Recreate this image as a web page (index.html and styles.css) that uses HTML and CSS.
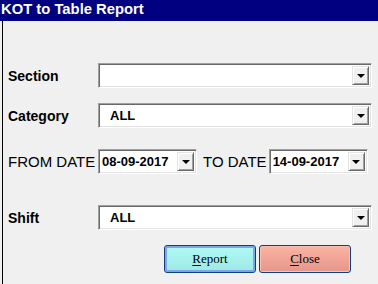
FILE: index.html
```html
<!DOCTYPE html>
<html lang="en">
<head>
    <meta charset="UTF-8">
    <title>KOT to Table Report</title>
    <link rel="stylesheet" href="styles.css">
</head>
<body>
    <div class="titlebar">KOT to Table Report</div>
    <div class="dialog">
        <!-- Section -->
        <div class="row row-section">
            <span class="label">Section</span>
            <div class="combo">
                <span class="combo-text"></span>
                <span class="combo-btn"><i class="arrow"></i></span>
            </div>
        </div>

        <!-- Category -->
        <div class="row row-category">
            <span class="label">Category</span>
            <div class="combo">
                <span class="combo-text">ALL</span>
                <span class="combo-btn"><i class="arrow"></i></span>
            </div>
        </div>

        <!-- Dates -->
        <div class="row row-dates">
            <span class="label label-plain">FROM DATE</span>
            <div class="combo combo-date">
                <span class="combo-text">08-09-2017</span>
                <span class="combo-btn"><i class="arrow"></i></span>
            </div>
            <span class="label-to">TO DATE</span>
            <div class="combo combo-date">
                <span class="combo-text">14-09-2017</span>
                <span class="combo-btn"><i class="arrow"></i></span>
            </div>
        </div>

        <!-- Shift -->
        <div class="row row-shift">
            <span class="label">Shift</span>
            <div class="combo">
                <span class="combo-text">ALL</span>
                <span class="combo-btn"><i class="arrow"></i></span>
            </div>
        </div>

        <div class="buttons">
            <button class="btn btn-report"><u>R</u>eport</button>
            <button class="btn btn-close"><u>C</u>lose</button>
        </div>
    </div>
</body>
</html>
```

FILE: styles.css
```css
html, body {
    margin: 0;
    padding: 0;
    height: 100%;
}
body {
    background: #f0f0f0;
    color: #000;
    font-family: "Liberation Sans", Arial, sans-serif;
    overflow: hidden;
}
.titlebar {
    height: 21px;
    line-height: 19px;
    background: #000080;
    color: #fff;
    font-weight: bold;
    font-size: 14.8px;
    padding-left: 1px;
}
.dialog {
    margin-left: 2px;
    border-left: 1px solid #000;
    height: 263px;
    box-sizing: border-box;
    overflow: hidden;
}
.row {
    display: flex;
    align-items: center;
    height: 25px;
}
.row-section { margin-top: 42px; }
.row-category { margin-top: 15px; }
.row-dates { margin-top: 21px; }
.row-shift { margin-top: 31px; }
.label {
    width: 90px;
    padding-left: 5px;
    flex: none;
    font-size: 14px;
    font-weight: bold;
}
.label-plain {
    font-weight: normal;
    font-size: 15px;
    white-space: nowrap;
}
.label-to {
    font-size: 15px;
    margin: 0 2px 0 6px;
    white-space: nowrap;
}
/* sunken combo box */
.combo {
    display: flex;
    align-items: stretch;
    width: 274px;
    height: 25px;
    box-sizing: border-box;
    background: #fff;
    border: 1px solid;
    border-color: #a0a0a0 #fff #fff #a0a0a0;
    box-shadow: inset 1px 1px #696969, inset -1px -1px #e3e3e3;
    padding: 2px;
}
.combo-date {
    width: 99px;
}
.combo-text {
    flex: 1;
    font-size: 13px;
    font-weight: bold;
    line-height: 19px;
    padding-left: 9px;
}
.combo-date .combo-text {
    padding-left: 1px;
}
.combo-btn {
    width: 17px;
    box-sizing: border-box;
    background: #f0f0f0;
    border: 1px solid;
    border-color: #e3e3e3 #696969 #696969 #e3e3e3;
    box-shadow: inset 1px 1px #fff, inset -1px -1px #a0a0a0;
    display: flex;
    align-items: center;
    justify-content: center;
}
.arrow {
    width: 0;
    height: 0;
    border-left: 4px solid transparent;
    border-right: 4px solid transparent;
    border-top: 4px solid #000;
    margin-top: 1px;
}
.buttons {
    display: flex;
    gap: 3px;
    margin-top: 15px;
    padding-left: 161px;
}
.btn {
    height: 28px;
    box-sizing: border-box;
    border: 1px solid #0f3f7c;
    border-radius: 3px;
    font-family: "Liberation Serif", "Times New Roman", serif;
    font-size: 13px;
    color: #000;
    padding: 0;
    margin: 0;
}
.btn u {
    text-underline-offset: 2px;
}
.btn-report {
    width: 92px;
    background: linear-gradient(#b0faf6, #9ee9e5);
    box-shadow: inset 0 0 0 2px #7ea6e6;
}
.btn-close {
    width: 92px;
    background: linear-gradient(#fbb3a3, #e5968a);
    box-shadow: inset 0 0 0 1px #f6c2b6;
}
```
